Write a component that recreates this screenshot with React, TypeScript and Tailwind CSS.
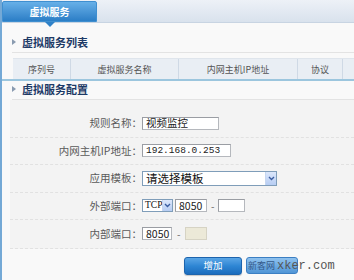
import React from "react";

const cjk = { fontFamily: '"Noto Sans CJK SC", "Noto Sans", sans-serif' };

function Heading({ text, h }: { text: string; h: number }) {
  return (
    <div className="flex items-center" style={{ height: h }}>
      <span className="ml-[10px] w-0 h-0 border-y-[3px] border-y-transparent border-l-[4px] border-l-[#8a9bb0]" />
      <span className="ml-[6px] text-[11px] font-bold text-[#1d3a66] leading-none">{text}</span>
    </div>
  );
}

function Row({ label, children, last }: { label: string; children: React.ReactNode; last?: boolean }) {
  return (
    <div className={`flex items-center h-[27.5px] ${last ? "" : "border-b border-dashed border-[#e1e1e1]"}`}>
      <div className="w-[132px] text-right text-[10.5px] text-[#5a5a5a] leading-none">{label}</div>
      <div className="flex items-center">{children}</div>
    </div>
  );
}

function Input({ w, value, mono, disabled }: { w: number; value?: string; mono?: boolean; disabled?: boolean }) {
  return (
    <div
      className={`h-[13px] flex items-center pl-[3px] border ${disabled ? "bg-[#ece9d8] border-[#d6d3c4]" : "bg-white border-[#b5b8bd] border-t-[#9a9da3] border-l-[#9a9da3]"}`}
      style={{ width: w }}
    >
      <span
        className={`leading-none text-[#222] ${mono ? "text-[9.5px]" : "text-[10.5px]"}`}
        style={mono ? { fontFamily: '"Liberation Mono", monospace' } : undefined}
      >
        {value}
      </span>
    </div>
  );
}

function Arrow() {
  return (
    <div className="h-full w-[11px] bg-gradient-to-b from-[#dce7fb] to-[#b7cdf3] border-l border-[#c6d6f0] flex items-center justify-center">
      <svg width="7" height="5" viewBox="0 0 7 5">
        <path d="M1 1 L3.5 3.5 L6 1" stroke="#3b5da0" strokeWidth="1.4" fill="none" />
      </svg>
    </div>
  );
}

export default function App() {
  return (
    <div className="w-[354px] h-[280px] bg-[#f9f9f9] border-l-2 border-[#74a9d6] overflow-hidden relative" style={cjk}>
      {/* top bar */}
      <div className="h-[23px] bg-gradient-to-b from-[#edf1f7] to-[#d9e2ed] border-b border-[#c8d4e2] flex items-end relative">
        <div className="w-[95px] h-[21px] bg-gradient-to-b from-[#67b0e8] to-[#2b7ec6] border border-[#3f8fd0] rounded-t-[2px] flex items-center justify-center">
          <span className="text-white text-[10px] font-bold leading-none">虚拟服务</span>
        </div>
        <span className="absolute left-[43px] top-[22px] w-0 h-0 border-x-[5px] border-x-transparent border-t-[5px] border-t-[#2f81c8]" />
      </div>

      <div className="mt-[9px]">
        <Heading text="虚拟服务列表" h={20} />
      </div>
      <div className="ml-[10px] border-b border-[#e3e3e3]" />

      {/* table header */}
      <div className="mt-[5px] ml-[11px] h-[21px] bg-[#e9eef4] border-t border-[#dfe5ec] flex text-[9px] text-[#555] leading-none">
        <div className="w-[58px] border-r border-[#cfd9e5] flex items-center justify-center">序列号</div>
        <div className="w-[108px] border-r border-[#cfd9e5] flex items-center justify-center">虚拟服务名称</div>
        <div className="w-[119px] border-r border-[#cfd9e5] flex items-center justify-center">内网主机IP地址</div>
        <div className="w-[45px] border-r border-[#cfd9e5] flex items-center justify-center">协议</div>
        <div className="flex-1" />
      </div>
      <div className="h-[2px] bg-[#9cc6de]" />

      <Heading text="虚拟服务配置" h={16} />
      <div className="ml-[10px] mt-[2px] border-b border-[#e3e3e3]" />

      {/* form */}
      <div className="ml-[8px] bg-[#f3f3f3] pt-[10px] border-b border-dashed border-[#e1e1e1]">
        <Row label="规则名称：">
          <Input w={77} value="视频监控" />
        </Row>
        <Row label="内网主机IP地址：">
          <Input w={89} value="192.168.0.253" mono />
        </Row>
        <Row label="应用模板：">
          <div className="w-[135px] h-[15px] bg-white border border-[#7f9db9] flex items-center justify-between">
            <span className="pl-[3px] text-[11.5px] text-[#111] leading-none">请选择模板</span>
            <Arrow />
          </div>
        </Row>
        <Row label="外部端口：">
          <div className="w-[31px] h-[13px] bg-white border border-[#7f9db9] flex items-center justify-between">
            <span className="pl-[2px] text-[9.5px] text-[#111] leading-none" style={{ fontFamily: '"Liberation Serif", serif' }}>TCP</span>
            <Arrow />
          </div>
          <div className="ml-[2px]">
            <Input w={32} value="8050" />
          </div>
          <span className="mx-[4px] text-[10px] text-[#666] leading-none">-</span>
          <Input w={27} />
        </Row>
        <Row label="内部端口：" last>
          <Input w={30} value="8050" />
          <span className="mx-[5px] text-[10px] text-[#666] leading-none">-</span>
          <Input w={22} disabled />
        </Row>
      </div>

      {/* buttons */}
      <div className="mt-[8px] flex items-center">
        <div className="ml-[182px] w-[58px] h-[18px] rounded-[3px] bg-gradient-to-b from-[#5aa6e6] via-[#2e86d4] to-[#1b6cbd] border border-[#1d64ad] flex items-center justify-center shadow-[0_1px_1px_rgba(0,0,0,0.2)]">
          <span className="text-white text-[9.5px] leading-none">增加</span>
        </div>
        <div className="ml-[4px] relative flex items-center">
          <div className="w-[52px] h-[17px] rounded-[3px] bg-gradient-to-b from-[#8fc2ee] to-[#4f95d6] border border-[#3c7fc3]" />
          <span className="absolute left-[2px] text-[9px] leading-none text-[#34598a]">
            新客网
          </span>
          <span
            className="absolute left-[31px] text-[12px] leading-none text-[#555] whitespace-nowrap"
            style={{ fontFamily: '"Liberation Mono", monospace' }}
          >
            xker.com
          </span>
        </div>
      </div>
    </div>
  );
}
